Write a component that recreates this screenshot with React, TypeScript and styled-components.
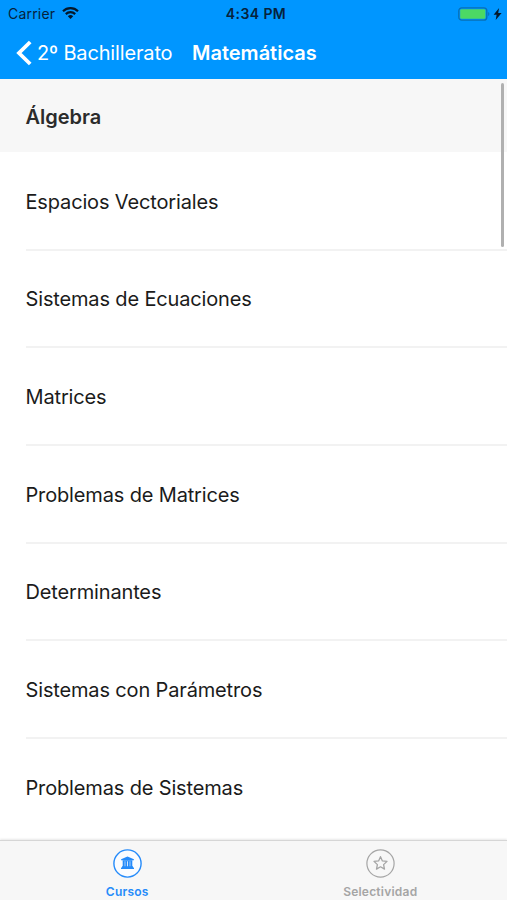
import React from "react";
import styled, { createGlobalStyle } from "styled-components";

const GlobalStyle = createGlobalStyle`
  * { box-sizing: border-box; }
  body { margin: 0; background: #fff; }
`;

const Screen = styled.div`
  width: 507px;
  height: 900px;
  display: flex;
  flex-direction: column;
  overflow: hidden;
  background: #fff;
  font-family: Inter, "Liberation Sans", sans-serif;
`;

const Header = styled.header`
  flex: none;
  height: 79px;
  background: #0096ff;
`;

const StatusBar = styled.div`
  height: 27px;
  padding: 0 5px 0 8px;
  display: grid;
  grid-template-columns: 1fr auto 1fr;
  align-items: center;
  color: #06223c;
`;

const Carrier = styled.div`
  display: flex;
  align-items: center;
  gap: 7px;
  font-size: 14px;
  line-height: 27px;
  letter-spacing: 0.2px;
`;

const Clock = styled.div`
  font-size: 14px;
  font-weight: 600;
  line-height: 27px;
  letter-spacing: 0.4px;
  padding-left: 2px;
`;

const Power = styled.div`
  display: flex;
  justify-content: flex-end;
  align-items: center;
  gap: 3px;
`;

const NavBar = styled.nav`
  height: 52px;
  display: flex;
  align-items: center;
  padding-left: 16px;
  color: #fff;
`;

const BackButton = styled.a`
  display: flex;
  align-items: center;
  gap: 4px;
  width: 176px;
  font-size: 20px;
  letter-spacing: -0.15px;
  white-space: nowrap;
`;

const Title = styled.h1`
  margin: 0;
  font-size: 20px;
  font-weight: 600;
  letter-spacing: 0;
`;

const Content = styled.main`
  position: relative;
  flex: 1;
  min-height: 0;
  overflow: hidden;
`;

const SectionHeader = styled.h2`
  margin: 0;
  height: 73px;
  padding: 3px 0 0 25.5px;
  display: flex;
  align-items: center;
  background: #f7f7f7;
  color: #2b2b2b;
  font-size: 20px;
  font-weight: 600;
  letter-spacing: 0;
`;

const List = styled.ul`
  margin: 0;
  padding: 1px 0 0 25.5px;
  list-style: none;
`;

const Row = styled.li`
  height: 97.7px;
  padding-top: 1.6px;
  display: flex;
  align-items: center;
  border-bottom: 2px solid #f2f2f2;
  color: #1b1b1b;
  font-size: 20px;
  letter-spacing: -0.15px;

  &:last-child {
    border-bottom-color: transparent;
  }
`;

const ScrollThumb = styled.div`
  position: absolute;
  top: 4px;
  right: 3px;
  width: 3px;
  height: 164px;
  border-radius: 2px;
  background: #b0b0b0;
`;

const TabBar = styled.footer`
  flex: none;
  height: 60px;
  display: grid;
  grid-template-columns: 1fr 1fr;
  background: #f7f7f7;
  border-top: 1px solid #d6d6d6;
  box-shadow: 0 -1px 2px #e8e8e8;
  z-index: 1;
`;

const Tab = styled.a<{ $active?: boolean }>`
  display: flex;
  flex-direction: column;
  align-items: center;
  padding-top: 8px;
  padding-left: ${(p) => (p.$active ? "1px" : "0")};
  gap: 6px;
  color: ${(p) => (p.$active ? "#258bfa" : "#a5a5a5")};
  font-size: 12px;
  font-weight: 600;
  line-height: 15px;
  letter-spacing: 0.22px;
`;

const Icon = styled.svg`
  display: block;
  flex: none;
`;

const topics = [
  "Espacios Vectoriales",
  "Sistemas de Ecuaciones",
  "Matrices",
  "Problemas de Matrices",
  "Determinantes",
  "Sistemas con Parámetros",
  "Problemas de Sistemas",
];

const WifiIcon = () => (
  <Icon width="17" height="13" viewBox="0 0 17 13" fill="none" stroke="#04182b" strokeWidth="2.2">
    <path d="M1 4.2a10.8 10.8 0 0 1 15 0M3.8 7.1a6.8 6.8 0 0 1 9.4 0" />
    <path d="M5.8 9.3a4 4 0 0 1 5.4 0L8.5 12Z" fill="#04182b" stroke="none" />
  </Icon>
);

const BatteryIcon = () => (
  <Icon width="32" height="14" viewBox="0 0 32 14">
    <rect x=".8" y=".8" width="28" height="12.4" rx="3" fill="#0096ff" stroke="#0870b5" strokeWidth="1.3" />
    <rect x="2.2" y="2.2" width="25.2" height="9.6" rx="1.4" fill="#4cd964" />
    <path d="M30.2 5c1.6.7 1.6 3.3 0 4Z" fill="#0870b5" />
  </Icon>
);

const BoltIcon = () => (
  <Icon width="9" height="12" viewBox="0 0 9 12">
    <path d="M6.1 0 .6 6.8h3L2.7 12 8.6 4.9H5.2Z" fill="#04182b" />
  </Icon>
);

const BackIcon = () => (
  <Icon width="17" height="26" viewBox="0 0 17 26">
    <path d="M14.2 2 3 13l11.2 11" fill="none" stroke="#fff" strokeWidth="3.8" />
  </Icon>
);

const CoursesIcon = () => (
  <Icon width="29" height="29" viewBox="0 0 29 29">
    <circle cx="14.5" cy="14.5" r="13.6" fill="#fafcff" stroke="currentColor" strokeWidth="1.4" />
    <g fill="currentColor">
      <path d="m14.5 7.5 6.4 2.7v1.1H8.1v-1.1Z" />
      <path d="M9.6 11.3h9.8v1H9.6ZM9.7 12h2v5.4h-2ZM12.3 12h1.8v5.4h-1.8ZM14.9 12h1.8v5.4h-1.8ZM17.3 12h2v5.4h-2ZM9 17.2h11v1.3H9ZM8 18.5h13v1.4H8Z" />
    </g>
  </Icon>
);

const ExamIcon = () => (
  <Icon width="29" height="29" viewBox="0 0 29 29" fill="none" stroke="currentColor">
    <circle cx="14.5" cy="14.5" r="13.6" strokeWidth="1.2" />
    <path
      d="m14.5 7.7 1.9 4.2 4.6.5-3.4 3.2.9 4.5-4-2.3-4 2.3.9-4.5L8 12.4l4.6-.5Z"
      strokeWidth="1.3"
      strokeLinejoin="round"
    />
  </Icon>
);

export default function App() {
  return (
    <Screen>
      <GlobalStyle />
      <Header>
        <StatusBar>
          <Carrier>
            Carrier
            <WifiIcon />
          </Carrier>
          <Clock>4:34 PM</Clock>
          <Power>
            <BatteryIcon />
            <BoltIcon />
          </Power>
        </StatusBar>
        <NavBar>
          <BackButton>
            <BackIcon />
            2º Bachillerato
          </BackButton>
          <Title>Matemáticas</Title>
        </NavBar>
      </Header>
      <Content>
        <SectionHeader>Álgebra</SectionHeader>
        <List>
          {topics.map((topic) => (
            <Row key={topic}>{topic}</Row>
          ))}
        </List>
        <ScrollThumb />
      </Content>
      <TabBar>
        <Tab $active>
          <CoursesIcon />
          Cursos
        </Tab>
        <Tab>
          <ExamIcon />
          Selectividad
        </Tab>
      </TabBar>
    </Screen>
  );
}
